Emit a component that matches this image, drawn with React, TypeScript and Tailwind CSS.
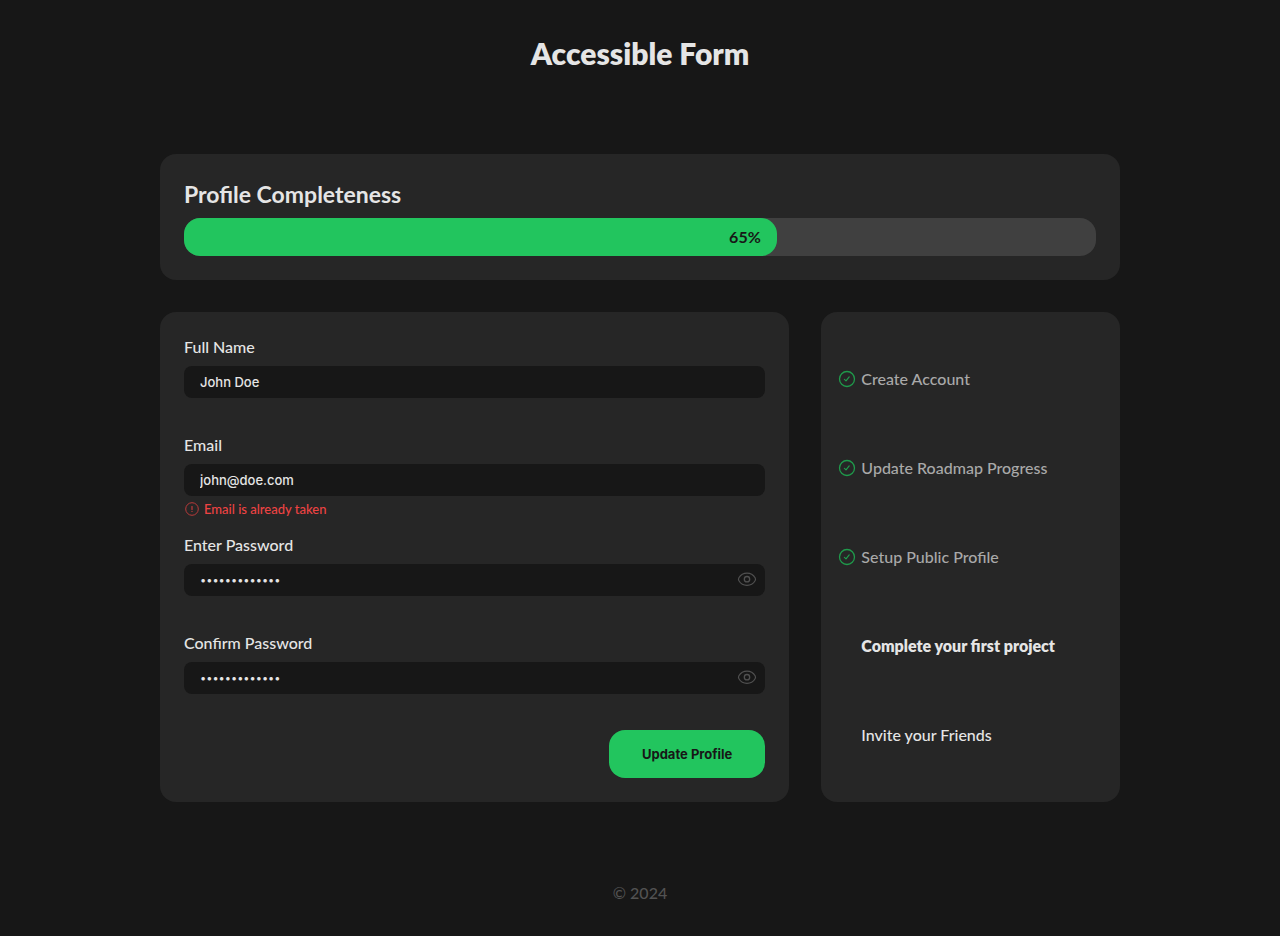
import { useState } from "react";

type Step = { label: string; state: "done" | "current" | "todo" };

const steps: Step[] = [
  { label: "Create Account", state: "done" },
  { label: "Update Roadmap Progress", state: "done" },
  { label: "Setup Public Profile", state: "done" },
  { label: "Complete your first project", state: "current" },
  { label: "Invite your Friends", state: "todo" },
];

const stepText = {
  done: "font-medium text-[#a9a9a9]",
  current: "font-extrabold text-neutral-200",
  todo: "font-medium text-neutral-200",
};

function CheckIcon() {
  return (
    <svg viewBox="0 0 18 18" className="size-[18px]" fill="none" stroke="#1f9a4b" aria-hidden="true">
      <circle cx="9" cy="9" r="7.5" strokeWidth="1.3" />
      <path d="M6.4 9.3 8 10.9l3.2-4" strokeWidth="1.2" strokeLinecap="round" strokeLinejoin="round" />
    </svg>
  );
}

function AlertIcon() {
  return (
    <svg viewBox="0 0 16 16" className="size-4" fill="none" stroke="#b93a3a" aria-hidden="true">
      <circle cx="8" cy="8" r="6.3" strokeWidth="1" />
      <path d="M8 5.6v2.8" strokeWidth="1.3" strokeLinecap="round" />
      <circle cx="8" cy="10.4" r="0.7" fill="#b93a3a" stroke="none" />
    </svg>
  );
}

function EyeIcon() {
  return (
    <svg viewBox="0 0 20 20" className="size-5" fill="none" stroke="#505050" aria-hidden="true">
      <path
        d="M10 3.1c3.9 0 6.6 2.1 8.1 4.6.6 1 .6 2 0 3-1.5 2.5-4.2 4.6-8.1 4.6s-6.6-2.1-8.1-4.6c-.6-1-.6-2 0-3C3.4 5.2 6.1 3.1 10 3.1Z"
        strokeWidth="1.2"
      />
      <circle cx="10" cy="9.2" r="2.7" strokeWidth="1.3" />
    </svg>
  );
}

type FieldProps = { id: string; label: string; value: string; type?: string; error?: string };

function Field({ id, label, value, type = "text", error }: FieldProps) {
  const [visible, setVisible] = useState(false);
  const secret = type === "password";
  const masked = secret && !visible;
  return (
    <div className={error ? "min-h-[100px]" : "min-h-[98px]"}>
      <label htmlFor={id} className="block pb-2 text-base leading-[22px] font-medium">
        {label}
      </label>
      <div className="flex h-8 items-center rounded-lg bg-[#171717] pr-2">
        <input
          id={id}
          type={secret && visible ? "text" : type}
          defaultValue={value}
          aria-invalid={error ? true : undefined}
          aria-describedby={error ? `${id}-error` : undefined}
          className={`h-8 min-w-0 flex-1 rounded-lg bg-transparent px-4 font-['Inter',sans-serif] text-neutral-200 outline-none ${masked ? "text-[11px]" : "text-[13px] font-medium"}`}
        />
        {secret && (
          <button type="button" aria-label="Show password" onClick={() => setVisible(!visible)}>
            <EyeIcon />
          </button>
        )}
      </div>
      {error && (
        <p id={`${id}-error`} className="flex items-center gap-1 pt-1 text-[13px] leading-[18px] font-medium text-[#ee4343]">
          <AlertIcon />
          {error}
        </p>
      )}
    </div>
  );
}

export default function App() {
  return (
    <div className="flex min-h-screen flex-col bg-[#171717] px-8 font-['Lato',sans-serif] text-neutral-200">
      <header className="py-8 text-center">
        <h1 className="text-3xl leading-[42px] font-extrabold">Accessible Form</h1>
      </header>
      <main className="mx-auto grid w-full max-w-[960px] grid-cols-3 gap-8 pt-12">
        <section className="col-span-3 rounded-2xl bg-[#262626] p-6">
          <h2 className="pb-2 text-[23px] leading-8 font-bold">Profile Completeness</h2>
          <div
            role="progressbar"
            aria-label="Profile Completeness"
            aria-valuenow={65}
            aria-valuemin={0}
            aria-valuemax={100}
            className="rounded-2xl bg-[#404040]"
          >
            <div className="w-[65%] rounded-2xl bg-[#22c55e] px-4 py-[7px] text-right text-base leading-6 font-bold text-[#171717]">
              65%
            </div>
          </div>
        </section>
        <form className="col-span-2 rounded-2xl bg-[#262626] p-6" onSubmit={(e) => e.preventDefault()}>
          <Field id="name" label="Full Name" value="John Doe" />
          <Field id="email" label="Email" type="email" value="john@doe.com" error="Email is already taken" />
          <Field id="password" label="Enter Password" type="password" value="password12345" />
          <Field id="confirm" label="Confirm Password" type="password" value="password12345" />
          <div className="flex justify-end">
            <button
              type="submit"
              className="h-12 rounded-2xl bg-[#22c55e] px-[33px] pt-px font-['Inter',sans-serif] text-[13px] font-bold text-[#171717]"
            >
              Update Profile
            </button>
          </div>
        </form>
        <aside className="flex rounded-2xl bg-[#262626] pt-[22px] pr-4 pb-[22px] pl-[17px]">
          <ul className="flex flex-1 flex-col">
            {steps.map((step) => (
              <li key={step.label} className={`flex flex-1 items-center gap-[5px] text-base leading-6 ${stepText[step.state]}`}>
                <span className="w-[18px] shrink-0">{step.state === "done" && <CheckIcon />}</span>
                {step.label}
              </li>
            ))}
          </ul>
        </aside>
      </main>
      <footer className="pt-20 pb-8 text-center text-base leading-[22px] font-medium text-[#525252]">© 2024</footer>
    </div>
  );
}
